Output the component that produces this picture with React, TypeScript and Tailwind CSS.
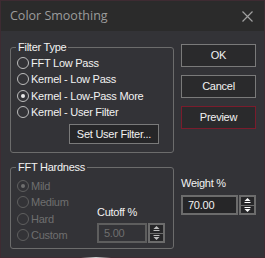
import React from "react";

const font = { fontFamily: '"Liberation Sans", Arial, sans-serif' };

function Radio({ label, checked, disabled }: { label: string; checked?: boolean; disabled?: boolean }) {
  return (
    <div className="flex h-[16.33px] items-center gap-[2px]">
      <span
        className={`flex h-[12px] w-[12px] items-center justify-center rounded-full border ${
          disabled ? "border-[#5f5f5f]" : "border-[#bdbdbd]"
        }`}
      >
        {checked && (
          <span className={`h-[4px] w-[4px] rounded-full ${disabled ? "bg-[#6f6f6f]" : "bg-[#e8e8e8]"}`} />
        )}
      </span>
      <span className={disabled ? "text-[#6f6f6f]" : "text-[#f2f2f2]"}>{label}</span>
    </div>
  );
}

function GroupBox({ title, className, children }: { title: string; className: string; children: React.ReactNode }) {
  return (
    <div className={`relative rounded-[3px] border border-[#6c6c6c] ${className}`}>
      <span className="absolute -top-[8px] left-[5px] bg-[#333337] px-[2px] leading-[14px] text-[#f2f2f2]">
        {title}
      </span>
      {children}
    </div>
  );
}

function Spinner({ disabled }: { disabled?: boolean }) {
  const c = disabled ? "#bdbdbd" : "#ffffff";
  return (
    <div className="flex h-full w-[17px] flex-col gap-[1px] border-2 border-[#6c6c6c] bg-[#6c6c6c]">
      <div className="flex flex-1 items-center justify-center bg-[#262628]">
        <svg width="7" height="5" viewBox="0 0 7 5">
          <path d="M3.5 0 L6.5 3 L0.5 3 Z" fill={c} />
          <rect x="0.5" y="4" width="6" height="1" fill={c} />
        </svg>
      </div>
      <div className="flex flex-1 items-center justify-center bg-[#262628]">
        <svg width="7" height="5" viewBox="0 0 7 5">
          <rect x="0.5" y="0" width="6" height="1" fill={c} />
          <path d="M0.5 2 L6.5 2 L3.5 5 Z" fill={c} />
        </svg>
      </div>
    </div>
  );
}

function Button({ label, accent }: { label: string; accent?: boolean }) {
  return (
    <div
      className={`flex h-[23px] items-center justify-center border bg-[#2a2a2c] text-[#f2f2f2] ${
        accent ? "border-[#7a1c2c]" : "border-[#7a7a7a]"
      }`}
    >
      {label}
    </div>
  );
}

export default function App() {
  return (
    <div
      style={font}
      className="relative flex h-[258px] w-[265px] flex-col border border-[#3e2b32] bg-[#333337] text-[11px] tracking-[-0.25px]"
    >
      <div className="flex h-[30px] shrink-0 items-center justify-between bg-[#2b2b2b] pl-[9px] pr-[11px]">
        <span
          className="text-[12.5px] tracking-normal text-[#9c9c9c]"
          style={{ fontFamily: '"Open Sans", "Noto Sans", sans-serif' }}
        >
          Color Smoothing
        </span>
        <svg width="11" height="11" viewBox="0 0 11 11">
          <path d="M0.5 0.5 L10.5 10.5 M10.5 0.5 L0.5 10.5" stroke="#a0a0a0" strokeWidth="1.2" />
        </svg>
      </div>

      <div className="flex gap-[7px] pl-[9px]">
        <div className="flex w-[164px] flex-col gap-[14px] pt-[16px]">
          <GroupBox title="Filter Type" className="h-[106px] pl-[6px] pt-[7px]">
            <Radio label="FFT Low Pass" />
            <Radio label="Kernel - Low Pass" />
            <Radio label="Kernel - Low-Pass More" checked />
            <Radio label="Kernel - User Filter" />
            <div className="ml-[52px] mt-[4px] flex h-[20px] w-[90px] items-center justify-center border border-[#7a7a7a] bg-[#262628] text-[#f2f2f2]">
              Set User Filter...
            </div>
          </GroupBox>

          <GroupBox title="FFT Hardness" className="flex h-[82px] pl-[6px] pt-[10px]">
            <div className="w-[80px]">
              <Radio label="Mild" checked disabled />
              <Radio label="Medium" disabled />
              <Radio label="Hard" disabled />
              <Radio label="Custom" disabled />
            </div>
            <div className="flex flex-col pt-[28px]">
              <span className="leading-[13px] text-[#f2f2f2]">Cutoff %</span>
              <div className="mt-[4px] flex h-[20px] gap-[1px]">
                <div className="flex w-[50px] items-center border-2 border-[#5e5e5e] pl-[5px] text-[#6f6f6f]">
                  5.00
                </div>
                <Spinner disabled />
              </div>
            </div>
          </GroupBox>
        </div>

        <div className="flex w-[75px] flex-col pt-[13px]">
          <div className="flex flex-col gap-[8px]">
            <Button label="OK" />
            <Button label="Cancel" />
            <Button label="Preview" accent />
          </div>
          <span className="mt-[48px] leading-[13px] text-[#f2f2f2]">Weight %</span>
          <div className="mt-[5px] flex h-[20px] gap-[1px]">
            <div className="flex w-[58px] items-center border-2 border-[#6c6c6c] bg-[#262628] pl-[5px] text-[#f2f2f2]">
              70.00
            </div>
            <Spinner />
          </div>
        </div>
      </div>

      <div className="absolute -bottom-[1px] left-[80px] h-[1px] w-[30px] bg-gradient-to-r from-transparent via-[#d0d0d0] to-transparent" />
    </div>
  );
}
